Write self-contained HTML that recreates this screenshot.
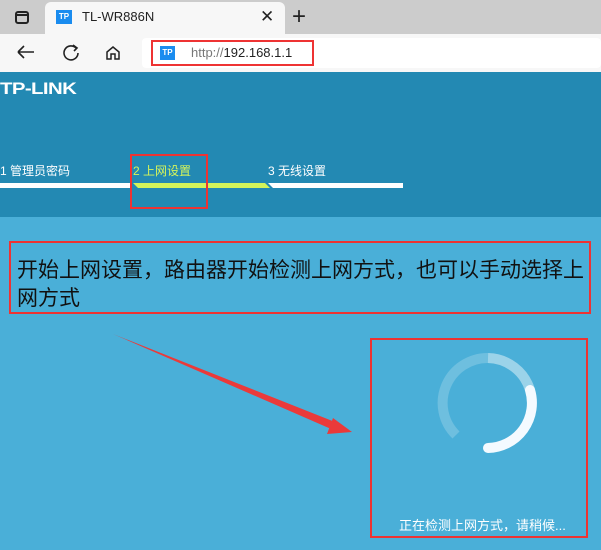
<!DOCTYPE html>
<html><head><meta charset="utf-8"><style>
*{margin:0;padding:0;box-sizing:border-box}
body{width:601px;height:550px;overflow:hidden;background:#4aafd8;font-family:"Liberation Sans","Noto Sans CJK SC",sans-serif;position:relative}
.abs{position:absolute}
</style></head><body>
<div class="abs" style="left:0;top:0;width:601px;height:34px;background:#cccccc"></div>
<div class="abs" style="left:45px;top:2px;width:240px;height:34px;background:#f7f7f7;border-radius:6px 6px 0 0"></div>
<div class="abs" style="left:15px;top:11px;width:14px;height:13px;border:2px solid #222;border-radius:3px"></div>
<div class="abs" style="left:15px;top:11px;width:14px;height:5px;border-bottom:2px solid #222"></div>
<div class="abs" style="left:56px;top:10px;width:16px;height:14px;background:#1a8cef;color:#fff;font:bold 8px/14px 'Liberation Sans';text-align:center">TP</div>
<div class="abs" style="left:82px;top:9px;font-size:13px;color:#222">TL-WR886N</div>
<div class="abs" style="left:260px;top:7px;font-size:17px;color:#222">✕</div>
<div class="abs" style="left:292px;top:3px;font-size:24px;color:#222;font-weight:300">+</div>
<div class="abs" style="left:0;top:34px;width:601px;height:38px;background:#f7f7f7"></div>
<svg class="abs" style="left:0;top:34px" width="140" height="38">
<path d="M18 18h16M18 18l6-6M18 18l6 6" stroke="#222" stroke-width="1.6" fill="none"/>
<path d="M76 14a7 7 0 1 0 2 5" stroke="#222" stroke-width="1.6" fill="none"/><path d="M73 11l4 3-3 3" stroke="#222" stroke-width="1.6" fill="none"/>
<path d="M107 25v-7l6-5 6 5v7h-4v-5h-4v5z" stroke="#222" stroke-width="1.5" fill="none"/>
</svg>
<div class="abs" style="left:142px;top:38px;width:459px;height:30px;background:#fff;border-radius:4px"></div>
<div class="abs" style="left:151px;top:40px;width:163px;height:26px;border:2px solid #e33"></div>
<div class="abs" style="left:160px;top:46px;width:15px;height:14px;background:#1a8cef;color:#fff;font:bold 8px/14px 'Liberation Sans';text-align:center">TP</div>
<div class="abs" style="left:191px;top:45px;font-size:13px;color:#777">http://<span style="color:#222">192.168.1.1</span></div>
<div class="abs" style="left:0;top:72px;width:601px;height:145px;background:#2389b3"></div>
<div class="abs" style="left:0;top:79px;font:bold 17px 'Liberation Sans';color:#fff;letter-spacing:-0.5px;transform:scaleX(1.2);transform-origin:left">TP-LINK</div>
<div class="abs" style="left:0;top:162px;font-size:12px;color:#fff">1 管理员密码</div>
<div class="abs" style="left:133px;top:162px;font-size:12px;color:#d6f55a">2 上网设置</div>
<div class="abs" style="left:268px;top:162px;font-size:12px;color:#fff">3 无线设置</div>
<div class="abs" style="left:0;top:183px;width:130px;height:5px;background:#fff"></div>
<svg class="abs" style="left:130px;top:183px" width="275" height="6"><polygon points="3,0 135,0 140,5 8,5" fill="#d3f45b"/><polygon points="138,0 273,0 273,5 143,5" fill="#fff"/></svg>
<div class="abs" style="left:130px;top:154px;width:78px;height:55px;border:2px solid #e33"></div>
<div class="abs" style="left:9px;top:241px;width:582px;height:73px;border:2px solid #e33"></div>
<div class="abs" style="left:17px;top:257px;width:570px;font-size:21px;line-height:28px;color:#111">开始上网设置，路由器开始检测上网方式，也可以手动选择上网方式</div>
<svg class="abs" style="left:0;top:0" width="601" height="550">
<polygon points="113,334 340,424 338,432" fill="#ea3a3a"/>
<polygon points="352,432 333,418 327,434" fill="#ea3a3a"/>
<path d="M456 435a45 45 0 0 1 32-77" fill="none" stroke="#fff" stroke-opacity="0.2" stroke-width="10"/>
<path d="M488 358a45 45 0 0 1 42 32" fill="none" stroke="#fff" stroke-opacity="0.45" stroke-width="10"/>
<path d="M530 390a45 45 0 0 1-42 58" fill="none" stroke="#f4faff" stroke-width="10" stroke-linecap="round"/>
</svg>
<div class="abs" style="left:370px;top:338px;width:218px;height:200px;border:2px solid #e33"></div>
<div class="abs" style="left:399px;top:515px;font-size:13px;color:#fff">正在检测上网方式，请稍候...</div>
</body></html>
